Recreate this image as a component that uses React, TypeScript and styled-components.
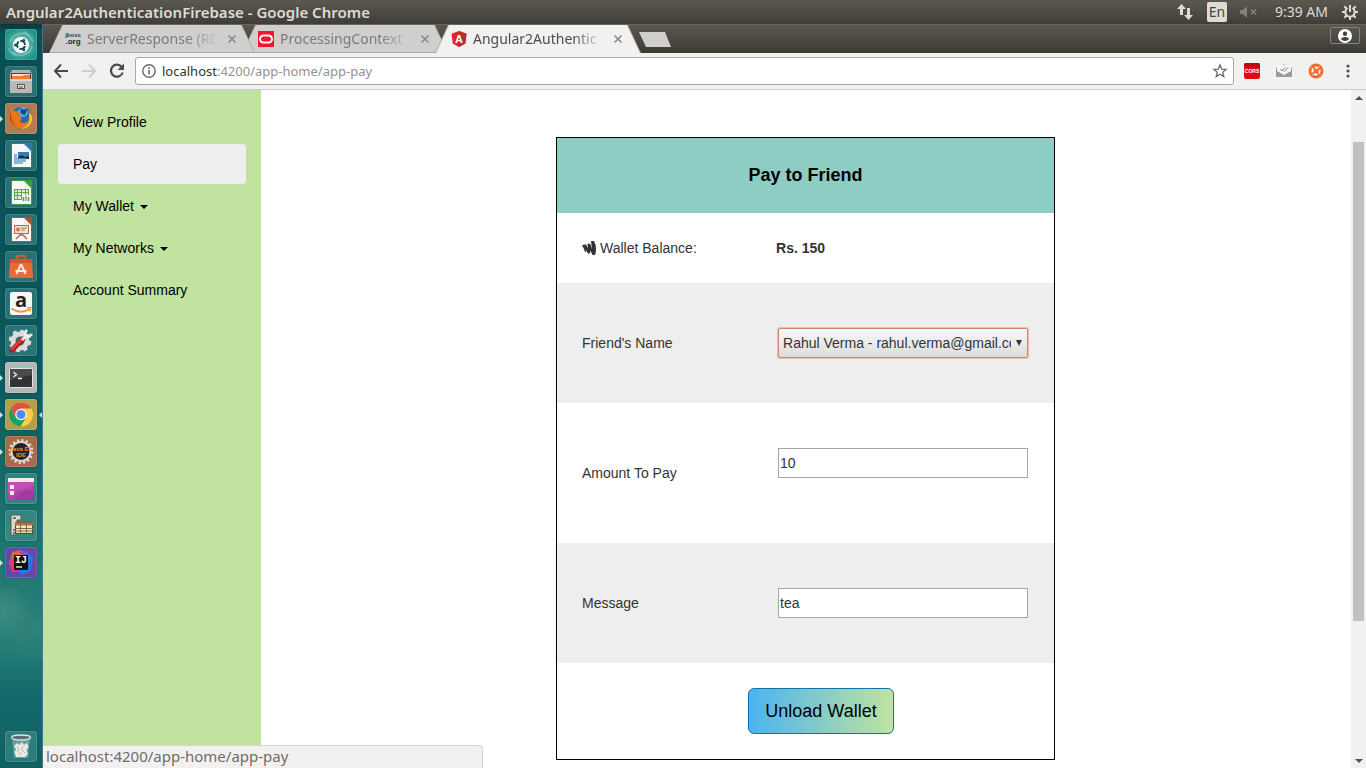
import React from 'react';
import styled, { createGlobalStyle } from 'styled-components';

const ui = "'Noto Sans', 'Open Sans', sans-serif";
const page = "'Liberation Sans', Arial, sans-serif";

const GlobalStyle = createGlobalStyle`
  *, *::before, *::after { box-sizing: border-box; }
  html, body, #root { height: 100%; }
  body { margin: 0; overflow: hidden; font-family: ${page}; }
  button { font: inherit; padding: 0; margin: 0; border: 0; background: none; color: inherit; }
  svg { display: block; flex: none; overflow: visible; }
`;

const Desktop = styled.div`
  display: flex;
  flex-direction: column;
  height: 100vh;
  overflow: hidden;
`;

/* ---- top panel ---- */
const Panel = styled.header`
  flex: none;
  height: 24px;
  display: flex;
  align-items: center;
  justify-content: space-between;
  padding: 0 8px 0 6px;
  background: linear-gradient(#5b594f, #3e3d39);
  color: #dfdbd2;
  font-family: ${ui};
`;
const PanelTitle = styled.h1`
  margin: 0;
  font-size: 15px;
  line-height: 24px;
  font-weight: 600;
  white-space: nowrap;
`;
const Indicators = styled.div`
  display: flex;
  align-items: center;
`;
const Indicator = styled.button<{ $gap: number }>`
  display: flex;
  align-items: center;
  margin-left: ${p => p.$gap}px;
  font-size: 14px;
  line-height: 20px;
  white-space: nowrap;
`;
const Lang = styled(Indicator)`
  width: 20px;
  height: 20px;
  justify-content: center;
  border-radius: 2px;
  background: #dfdbd2;
  color: #45443f;
`;

const Workspace = styled.div`
  flex: 1;
  min-height: 0;
  display: flex;
`;

/* ---- launcher ---- */
const Launcher = styled.nav`
  flex: none;
  width: 43px;
  display: flex;
  flex-direction: column;
  gap: 6px;
  padding: 5px 5px 6px;
  border-right: 1px solid #3f7690;
  background:
    radial-gradient(circle at 4px 588px, #3b8c81 0, #34877d 12px, transparent 28px),
    radial-gradient(circle at 34px 606px, #2f857c 0, #2c8078 10px, transparent 32px),
    linear-gradient(#07383d 0, #0a5054 8px, #0a5358 200px, #0b5a5d 350px, #1c7570 520px, #28827a 610px, #146a6a 670px, #0f6163 100%);
`;
const Tile = styled.button<{ $bg: string; $last?: boolean }>`
  position: relative;
  flex: none;
  width: 32px;
  height: 31px;
  margin-top: ${p => (p.$last ? 'auto' : '0')};
  border-radius: 3px;
  background: ${p => p.$bg};
  box-shadow: inset 0 0 0 1px rgba(255, 255, 255, 0.14), 0 0 2px rgba(0, 0, 0, 0.35);
`;
const Pip = styled.i<{ $right?: boolean }>`
  position: absolute;
  top: 13px;
  ${p => (p.$right ? 'right: -5px; border-right: 3px solid #cfe0df;' : 'left: -5px; border-left: 3px solid #cfe0df;')}
  border-top: 3px solid transparent;
  border-bottom: 3px solid transparent;
`;

/* ---- browser ---- */
const Browser = styled.div`
  position: relative;
  flex: 1;
  min-width: 0;
  display: flex;
  flex-direction: column;
`;
const TabStrip = styled.div`
  flex: none;
  height: 29px;
  display: flex;
  align-items: flex-start;
  padding: 0 6px;
  background: linear-gradient(#5a574e, #3c3b37);
  border-top: 1px solid #6a655a;
`;
const Tab = styled.div<{ $active?: boolean; $level: number }>`
  position: relative;
  isolation: isolate;
  z-index: ${p => p.$level};
  flex: none;
  width: 206px;
  height: 28px;
  margin-right: -13px;
  padding: 0 19px 0 16px;
  display: flex;
  align-items: center;
  gap: 6px;
  color: ${p => (p.$active ? '#4c4c4c' : '#7d7b79')};
  &::before, &::after {
    content: '';
    position: absolute;
    z-index: -1;
    inset: 0;
    clip-path: polygon(0 100%, 13px 0, calc(100% - 13px) 0, 100% 100%);
    background: #aaa8a5;
  }
  &::after {
    inset: 0 1px ${p => (p.$active ? 0 : 1)}px;
    background: ${p => (p.$active ? '#f2f1f0' : '#d0cfce')};
  }
`;
const TabTitle = styled.span`
  flex: 1;
  min-width: 0;
  overflow: hidden;
  white-space: nowrap;
  font-family: ${ui};
  font-size: 14px;
  line-height: 20px;
  mask-image: linear-gradient(to right, #000 calc(100% - 34px), transparent calc(100% - 3px));
`;
const TabClose = styled.button`
  display: flex;
  margin-left: 1px;
`;
const NewTab = styled.button`
  width: 32px;
  height: 15px;
  margin: 7px 0 0 11px;
  clip-path: polygon(0 0, 26px 0, 100% 100%, 7px 100%);
  background: #d0cfce;
`;
const Profile = styled.button`
  width: 30px;
  height: 17px;
  margin: 2px 0 0 auto;
  display: flex;
  align-items: center;
  justify-content: center;
  border: 1px solid #85837c;
  border-radius: 2px;
`;
const Toolbar = styled.div`
  flex: none;
  height: 37px;
  display: flex;
  align-items: center;
  gap: 10px;
  padding: 0 10px;
  background: #f2f1f0;
  border-bottom: 1px solid #d0cecc;
`;
const ButtonGroup = styled.div<{ $gap: number }>`
  flex: none;
  display: flex;
  gap: ${p => p.$gap}px;
`;
const ToolButton = styled.button`
  display: flex;
  flex: none;
`;
const Omnibox = styled.div`
  flex: 1;
  min-width: 0;
  height: 28px;
  display: flex;
  align-items: center;
  gap: 6px;
  padding: 0 6px;
  border: 1px solid #aaa7a4;
  border-radius: 3px;
  background: #fff;
`;
const Url = styled.span`
  flex: 1;
  font-family: ${ui};
  font-size: 13px;
  line-height: 20px;
  color: #96928f;
  b { font-weight: 400; color: #333; }
`;

/* ---- page ---- */
const Viewport = styled.div`
  flex: 1;
  min-height: 0;
  display: flex;
  background: #fff;
`;
const Site = styled.div`
  flex: 1;
  min-width: 0;
  display: flex;
  overflow: hidden;
`;
const Sidebar = styled.nav`
  flex: none;
  width: 16.67%;
  padding: 12px 15px;
  background: #c0e3a0;
`;
const NavList = styled.ul`
  list-style: none;
  margin: 0;
  padding: 0;
  display: flex;
  flex-direction: column;
  gap: 2px;
`;
const NavLink = styled.a<{ $active?: boolean }>`
  display: flex;
  align-items: center;
  gap: 6px;
  padding: 10px 15px;
  border-radius: 4px;
  background: ${p => (p.$active ? '#eee' : 'transparent')};
  color: #000;
  font-size: 14px;
  line-height: 20px;
  text-decoration: none;
`;
const Caret = styled.i`
  margin-top: 2px;
  border-top: 4px solid #000;
  border-left: 4px solid transparent;
  border-right: 4px solid transparent;
`;
const Main = styled.main`
  flex: 1;
  min-width: 0;
  padding: 47px 1px 0 0;
`;
const Card = styled.form`
  max-width: 499px;
  margin: 0 auto;
  border: 1px solid #000;
  color: #333;
  font-size: 14px;
  line-height: 20px;
`;
const CardTitle = styled.h2`
  margin: 0;
  padding: 25px;
  background: #8ecdc4;
  color: #000;
  font-size: 18px;
  line-height: 25px;
  text-align: center;
`;
const Row = styled.div<{ $shaded?: boolean; $pad: number }>`
  display: grid;
  grid-template-columns: 194px minmax(0, 1fr);
  align-items: center;
  padding: ${p => p.$pad}px 24px ${p => p.$pad}px 25px;
  background: ${p => (p.$shaded ? '#eee' : '#fff')};
`;
const RowLabel = styled.label`
  display: flex;
  align-items: center;
  gap: 4px;
`;
const Field = styled.div<{ $hint?: boolean }>`
  position: relative;
  margin: 0 2px;
  padding-bottom: ${p => (p.$hint ? 20 : 0)}px;
`;
const TextInput = styled.input`
  display: block;
  width: 100%;
  height: 30px;
  padding: 0 1px;
  border: 1px solid #a6a6a6;
  border-radius: 0;
  background: #fff;
  color: #333;
  font: 14px/20px ${page};
  outline: 0;
`;
const Select = styled.select`
  appearance: none;
  display: block;
  width: 100%;
  height: 30px;
  padding: 0 16px 0 4px;
  border: 1px solid #d0836d;
  border-radius: 2px;
  box-shadow: 0 0 0 1px rgba(240, 140, 110, 0.5);
  background: linear-gradient(#f8f8f8, #dcdcdc);
  color: #333;
  font: 14px/20px ${page};
  outline: 0;
`;
const SelectArrow = styled.i`
  position: absolute;
  top: 12px;
  right: 6px;
  border-top: 6px solid #333;
  border-left: 3px solid transparent;
  border-right: 3px solid transparent;
  pointer-events: none;
`;
const Actions = styled.div`
  padding: 25px 25px 25px 56px;
  text-align: center;
`;
const Submit = styled.button`
  padding: 10px 16px;
  border: 1px solid #0f75a8;
  border-radius: 6px;
  background: linear-gradient(to right, #4ab4f0, #c0e3a0);
  color: #000;
  font-size: 18px;
  line-height: 24px;
  vertical-align: top;
`;
const Scrollbar = styled.div`
  flex: none;
  width: 15px;
  display: grid;
  grid-template-rows: 15px 37fr 479fr 132fr 15px;
  justify-items: center;
  background: #f1f1f1;
`;
const ScrollArrow = styled.button<{ $down?: boolean }>`
  display: flex;
  align-items: center;
  grid-row: ${p => (p.$down ? 5 : 1)};
`;
const Thumb = styled.div`
  grid-row: 3;
  width: 11px;
  background: #c1c1c1;
`;
const StatusBubble = styled.div`
  position: absolute;
  left: 0;
  bottom: 0;
  width: 440px;
  height: 23px;
  padding: 0 3px;
  border: solid #d6d5d2;
  border-width: 1px 1px 0 0;
  border-radius: 0 4px 0 0;
  background: #f2f1f0;
  color: #6f6c69;
  font-family: ${ui};
  font-size: 15px;
  line-height: 21px;
`;

const glass = 'rgba(120, 190, 185, 0.28)';

const Doc = ({ c, children }: { c: string; children: React.ReactNode }) => (
  <svg width="32" height="31" viewBox="0 0 32 31">
    <path d="M6.500 3.500H19L26.500 11V27.500H6.500Z" fill="#f8f8f8" stroke={c} />
    <path d="M18 3H27V12Z" fill={c} />
    <path d="M19 3.500V11H26.500Z" fill="#e6e6e6" opacity=".5" />
    {children}
  </svg>
);

const apps: { name: string; bg: string; run?: boolean; focus?: boolean; art: React.ReactNode }[] = [
  {
    name: 'Dash', bg: 'radial-gradient(circle, #8cc9bf, #1e948a 75%)',
    art: (
      <svg width="32" height="31" viewBox="0 0 32 31">
        <path d="M5 13C7 5 19 1 25 8M27 17C26 26 14 29 7 23M4 19Q5 25 12 27M28 13Q26 6 19 3" fill="none" stroke="#b9ddd7" strokeWidth="1.500" opacity=".45" />
        <circle cx="16" cy="16" r="8" fill="#fff" />
        <circle cx="16" cy="16" r="4" fill="none" stroke="#14524f" strokeWidth="2" strokeDasharray="6.800 1.570" strokeDashoffset="-1" />
        <circle cx="10.500" cy="16" r="1.500" fill="#14524f" /><circle cx="18.800" cy="11.200" r="1.500" fill="#14524f" /><circle cx="18.800" cy="20.800" r="1.500" fill="#14524f" />
      </svg>
    ),
  },
  {
    name: 'Files', bg: glass,
    art: (
      <svg width="32" height="31" viewBox="0 0 32 31">
        <path d="M7 4H25L27 8V16H5V8Z" fill="#b5b3b0" />
        <rect x="6" y="7" width="20" height="7" fill="#54403a" />
        <path d="M7 8H25V10H7Z" fill="#f6e7d7" /><path d="M7 10H17L19 9H25V14H7Z" fill="#ed7d35" />
        <path d="M5 14H27V27H5Z" fill="#b9b8b6" /><path d="M5 14H27" stroke="#e8e6e3" strokeWidth="1.500" />
        <rect x="12.500" y="18.500" width="7" height="4" fill="#ddd" stroke="#555" /><path d="M14 21H18" stroke="#555" />
      </svg>
    ),
  },
  {
    name: 'Firefox', bg: '#b27a55', run: true,
    art: (
      <svg width="32" height="31" viewBox="0 0 32 31">
        <circle cx="16.500" cy="15" r="11" fill="#2767b0" /><circle cx="18" cy="9" r="5" fill="#5cadde" />
        <path d="M15 5Q19 8 23 5L20 12L16 11Z" fill="#164b8e" />
        <path d="M6 6Q8 8 11 8Q14 7 15 9L13 12Q18 14 16 17Q13 19 18 20Q24 20 24 14Q25 12 23 7Q28 11 28 16A12 11.500 0 0 1 4.500 17Q4 10 6 6Z" fill="#e8771c" />
        <path d="M24 10Q28 12 27 18Q24 26 16 26Q24 23 24.500 17Z" fill="#f8c430" />
        <path d="M6 8Q5 17 11 23Q7 21 5 17Q4 12 6 8Z" fill="#c6421b" />
      </svg>
    ),
  },
  {
    name: 'Writer', bg: glass,
    art: (
      <Doc c="#2a79a9">
        <rect x="13" y="12" width="11" height="7" fill="#347fb8" /><path d="M13 19V17L17 15L20 17L24 16V19Z" fill="#14334b" />
        <path d="M9 15H12M9 17H12M9 19H21M9 21H21M9 23H18" stroke="#5aa3cf" strokeWidth="1.600" />
      </Doc>
    ),
  },
  {
    name: 'Calc', bg: glass,
    art: (
      <Doc c="#3b9b3c">
        <rect x="9.500" y="12.500" width="14" height="10" fill="#dff1d5" stroke="#59a844" />
        <path d="M9 15.500H24M9 18.500H24M12.500 12V23M16.500 12V23M20.500 12V23" stroke="#59a844" />
        <rect x="17" y="18" width="9" height="7" fill="#f4f8f5" /><path d="M18.500 24V20M23.500 24V20" stroke="#3e8fc2" strokeWidth="1.500" /><path d="M21 24V19" stroke="#e8853b" strokeWidth="1.500" />
      </Doc>
    ),
  },
  {
    name: 'Impress', bg: glass,
    art: (
      <Doc c="#a35332">
        <rect x="9.500" y="11.500" width="14" height="8" fill="#f6dfd1" stroke="#c26845" />
        <circle cx="13" cy="15.500" r="2" fill="#d67150" /><path d="M16 14H22M16 16H20" stroke="#6b9e69" /><path d="M16 20V22M11 25L15 21H18L22 25" fill="none" stroke="#c26845" strokeWidth="1.500" />
      </Doc>
    ),
  },
  {
    name: 'Software', bg: glass,
    art: (
      <svg width="32" height="31" viewBox="0 0 32 31">
        <path d="M12 9V6Q12 5 13 5H19Q20 5 20 6V9" fill="none" stroke="#c85c38" strokeWidth="2.500" />
        <path d="M5 8H27L28 27H4Z" fill="#ea6a33" /><path d="M5 8H27V12H5Z" fill="#d25829" />
        <path d="M16 13L11.500 23M16 13L20.500 23M10.500 20H21.500" stroke="#fbe9df" strokeWidth="2" fill="none" />
      </svg>
    ),
  },
  {
    name: 'Amazon', bg: glass,
    art: (
      <svg width="32" height="31" viewBox="0 0 32 31">
        <rect x="5" y="4" width="22" height="23" rx="2" fill="#f7f7f7" />
        <text x="16" y="19" textAnchor="middle" fontFamily="Open Sans" fontWeight="700" fontSize="20" fill="#222">a</text>
        <path d="M6.500 20.500Q15 26.500 24 21.500" fill="none" stroke="#f29a23" strokeWidth="1.800" /><path d="M22 20L26 19.500L24.500 23.500" fill="none" stroke="#f29a23" strokeWidth="1.300" />
      </svg>
    ),
  },
  {
    name: 'Settings', bg: glass,
    art: (
      <svg width="32" height="31" viewBox="0 0 32 31">
        <circle cx="15" cy="16" r="7" fill="none" stroke="#dcdddb" strokeWidth="5" />
        <circle cx="15" cy="16" r="9.800" fill="none" stroke="#dcdddb" strokeWidth="3" strokeDasharray="4 3.700" />
        <path d="M7 25L18 14" stroke="#9c1c1c" strokeWidth="5" strokeLinecap="round" /><path d="M7 24L17 14" stroke="#e03c35" strokeWidth="3" strokeLinecap="round" />
        <path d="M17 15L22 10" stroke="#eee" strokeWidth="3" /><path d="M22 5Q19 8 21 11Q24 13 27 9" fill="none" stroke="#eee" strokeWidth="2.500" />
      </svg>
    ),
  },
  {
    name: 'Terminal', bg: '#b1b7b6', run: true,
    art: (
      <svg width="32" height="31" viewBox="0 0 32 31">
        <rect x="4.500" y="6.500" width="23" height="19" rx="1" fill="#303331" stroke="#e2e4e2" /><path d="M5 7H27V13L5 18Z" fill="#474a48" />
        <path d="M8.500 10L11.500 12.500L8.500 15M13 16.500H17" fill="none" stroke="#f2f2f2" strokeWidth="1.300" />
      </svg>
    ),
  },
  {
    name: 'Chrome', bg: '#b0a04b', run: true, focus: true,
    art: (
      <svg width="32" height="31" viewBox="0 0 32 31">
        <circle cx="16" cy="15.500" r="12" fill="#ffcd43" />
        <path d="M5.600 9.500A12 12 0 0 1 26.400 9.500H16L10.500 18.500Z" fill="#de5145" />
        <path d="M5.600 9.500A12 12 0 0 0 15.500 27.500L21 18.500L11 18.500Z" fill="#1da160" />
        <circle cx="16" cy="15.500" r="5.800" fill="#f5f5f5" /><circle cx="16" cy="15.500" r="4.500" fill="#4c8bf5" />
      </svg>
    ),
  },
  {
    name: 'Eclipse', bg: '#a56a49', run: true,
    art: (
      <svg width="32" height="31" viewBox="0 0 32 31">
        <circle cx="16" cy="15.500" r="11" fill="none" stroke="#ddd8d3" strokeWidth="3" strokeDasharray="2.200 2.120" />
        <circle cx="16" cy="15.500" r="9.500" fill="#28202a" stroke="#ddd8d3" strokeWidth="2" />
        <text x="16" y="15" textAnchor="middle" fontFamily="Liberation Sans" fontWeight="700" fontSize="6" fill="#f28a2d">Java EE</text>
        <text x="16" y="21" textAnchor="middle" fontFamily="Liberation Sans" fontWeight="700" fontSize="6" fill="#f28a2d">IDE</text>
      </svg>
    ),
  },
  {
    name: 'Window spread', bg: glass,
    art: (
      <svg width="32" height="31" viewBox="0 0 32 31">
        <rect x="3" y="6" width="26" height="21" fill="#b13ea9" /><path d="M3 9H29V17Q14 16 9 27H3Z" fill="#c050b8" /><path d="M3 21L29 13V27H3Z" fill="#8e2f8c" opacity=".35" />
        <rect x="3" y="5" width="26" height="4" fill="#efeedd" />
        <rect x="5" y="12" width="4" height="4" fill="#f5edf5" /><rect x="5" y="18" width="4" height="4" fill="#f5edf5" />
      </svg>
    ),
  },
  {
    name: 'Database', bg: glass,
    art: (
      <svg width="32" height="31" viewBox="0 0 32 31">
        <path d="M6 5H16V10H12V25H6Z" fill="#dedacb" stroke="#57564d" /><path d="M8 8H11M8 20H10M8 23H10" stroke="#777" strokeWidth="2" />
        <rect x="10.500" y="12.500" width="17" height="11" fill="#f1e6b5" stroke="#58452c" /><path d="M10 14H28" stroke="#a47a42" strokeWidth="3" /><path d="M10 18.500H28M10 21H28M15.500 14V24M21.500 14V24" stroke="#7b6847" />
      </svg>
    ),
  },
  {
    name: 'IntelliJ IDEA', bg: '#6348a6', run: true,
    art: (
      <svg width="32" height="31" viewBox="0 0 32 31">
        <path d="M7 5L16 3L22 10L14 20L4 18Z" fill="#e8632f" /><path d="M4 13L13 9L19 24L7 25Z" fill="#ea3571" /><path d="M21 5L28 10L26 23L18 28L12 24L24 18Z" fill="#167ff3" /><path d="M15 3L23 5L24 12L16 9Z" fill="#7c59d1" />
        <rect x="9" y="8" width="14" height="15" fill="#111" />
        <text x="10" y="16" fontFamily="Liberation Mono" fontWeight="700" fontSize="10" fill="#fff">IJ</text><path d="M11 20H17" stroke="#fff" strokeWidth="1.300" />
      </svg>
    ),
  },
];

const TrashArt = () => (
  <svg width="32" height="31" viewBox="0 0 32 31">
    <path d="M7 6H25L23 27H9Z" fill="#9bbab8" opacity=".55" />
    <ellipse cx="16" cy="6.500" rx="9.500" ry="2.500" fill="#53706f" stroke="#dbe4e3" strokeWidth="1.300" />
    <path d="M9 15L12 12L14 14L17 11L19 14L22 12L23.500 16L21.500 19L23 23L20 26H11L9.500 21L11 18Z" fill="#e8e9e7" />
    <path d="M12 16L14 18L12 21M18 15L17 19L20 22M14 24L16 21" fill="none" stroke="#b3bab8" />
  </svg>
);

const JbossIcon = () => (
  <svg width="16" height="16" viewBox="0 0 16 16">
    <text x="8" y="6" textAnchor="middle" fontFamily="Liberation Sans" fontSize="6" fill="#20374a" fontWeight="700">jboss</text>
    <text x="8" y="13" textAnchor="middle" fontFamily="Liberation Sans" fontSize="8" fill="#172b3a" fontWeight="700">.org</text>
  </svg>
);
const OracleIcon = () => (
  <svg width="16" height="16" viewBox="0 0 16 16">
    <rect width="16" height="16" fill="#f8152b" /><rect x="2" y="4.500" width="12" height="7" rx="3.500" fill="none" stroke="#fff" strokeWidth="2" />
  </svg>
);
const AngularIcon = () => (
  <svg width="16" height="16" viewBox="0 0 16 16">
    <path d="M8 0L15.500 2.700L14.300 12.500L8 16L1.700 12.500L.5 2.700Z" fill="#e2232f" /><path d="M8 0L15.500 2.700L14.300 12.500L8 16Z" fill="#b52e31" />
    <text x="8" y="12" textAnchor="middle" fontFamily="Liberation Sans" fontWeight="700" fontSize="11" fill="#fff">A</text>
  </svg>
);

const tabs = [
  { title: 'ServerResponse (RE', icon: <JbossIcon />, level: 2 },
  { title: 'ProcessingContext', icon: <OracleIcon />, level: 1 },
  { title: 'Angular2Authentic', icon: <AngularIcon />, level: 3, active: true },
];

const links = [
  { label: 'View Profile' },
  { label: 'Pay', active: true },
  { label: 'My Wallet', caret: true },
  { label: 'My Networks', caret: true },
  { label: 'Account Summary' },
];

export default function App() {
  return (
    <Desktop>
      <GlobalStyle />
      <Panel>
        <PanelTitle>Angular2AuthenticationFirebase - Google Chrome</PanelTitle>
        <Indicators>
          <Indicator $gap={0} aria-label="Network">
            <svg width="16" height="16" viewBox="0 0 16 16" fill="#dfdbd2"><path d="M4.500 0L9 5H6V11H3V5H0ZM11.500 16L16 11H13V4H10V11H7Z" /></svg>
          </Indicator>
          <Lang $gap={14}>En</Lang>
          <Indicator $gap={13} aria-label="Sound muted">
            <svg width="17" height="14" viewBox="0 0 17 14"><path d="M0 5H3L7 1V13L3 9H0Z" fill="#85837c" /><path d="M11 4.500L16 9.500M16 4.500L11 9.500" stroke="#85837c" strokeWidth="1.500" /></svg>
          </Indicator>
          <Indicator $gap={18}>9:39 AM</Indicator>
          <Indicator $gap={14} aria-label="System">
            <svg width="16" height="16" viewBox="0 0 16 16" fill="none" stroke="#dfdbd2" strokeWidth="2"><path d="M5.500 4A4.700 4.700 0 1 0 10.500 4M8 1V8" /><path d="M0 8H3M13 8H16M8 13V16M2.300 2.300L4.500 4.500M13.700 2.300L11.500 4.500M2.300 13.700L4.500 11.500M13.700 13.700L11.500 11.500" /></svg>
          </Indicator>
        </Indicators>
      </Panel>
      <Workspace>
        <Launcher aria-label="Launcher">
          {apps.map(a => (
            <Tile key={a.name} $bg={a.bg} aria-label={a.name}>
              {a.art}
              {a.run && <Pip />}
              {a.focus && <Pip $right />}
            </Tile>
          ))}
          <Tile $bg={glass} $last aria-label="Trash"><TrashArt /></Tile>
        </Launcher>
        <Browser>
          <TabStrip>
            {tabs.map(t => (
              <Tab key={t.title} $active={t.active} $level={t.level}>
                {t.icon}
                <TabTitle>{t.title}</TabTitle>
                <TabClose aria-label="Close tab">
                  <svg width="8" height="8" viewBox="0 0 8 8" stroke="#8b8987" strokeWidth="1.600"><path d="M.5 .5L7.500 7.500M7.500 .5L.5 7.500" /></svg>
                </TabClose>
              </Tab>
            ))}
            <NewTab aria-label="New tab" />
            <Profile aria-label="Profile">
              <svg width="14" height="14" viewBox="0 0 14 14"><circle cx="7" cy="7" r="7" fill="#fff" /><circle cx="7" cy="4.700" r="2.200" fill="#45443f" /><path d="M2.800 10Q4 8 7 8T11.200 10Q9.500 12 7 12T2.800 10Z" fill="#45443f" /></svg>
            </Profile>
          </TabStrip>
          <Toolbar>
            <ButtonGroup $gap={12}>
              <ToolButton aria-label="Back">
                <svg width="16" height="16" viewBox="0 0 16 16" fill="none" stroke="#4a4a4a" strokeWidth="2"><path d="M15 8H2.500M8 1.500L2 8L8 14.500" /></svg>
              </ToolButton>
              <ToolButton aria-label="Forward">
                <svg width="16" height="16" viewBox="0 0 16 16" fill="none" stroke="#cfcecd" strokeWidth="2"><path d="M1 8H13.500M8 1.500L14 8L8 14.500" /></svg>
              </ToolButton>
              <ToolButton aria-label="Reload">
                <svg width="16" height="16" viewBox="0 0 16 16"><path d="M12.700 4A6 6 0 1 0 13.700 9.500" fill="none" stroke="#4a4a4a" strokeWidth="2.200" /><path d="M15 .5V7H8.500Z" fill="#4a4a4a" /></svg>
              </ToolButton>
            </ButtonGroup>
            <Omnibox>
              <svg width="14" height="14" viewBox="0 0 14 14"><circle cx="7" cy="7" r="6.200" fill="none" stroke="#6b6b6b" strokeWidth="1.400" /><path d="M7 6V10.500M7 3.300V5" stroke="#6b6b6b" strokeWidth="1.600" /></svg>
              <Url><b>localhost</b>:4200/app-home/app-pay</Url>
              <svg width="14" height="14" viewBox="0 0 14 14"><path d="M7 1L8.700 5.100L13 5.400L9.700 8.200L10.800 12.600L7 10.200L3.200 12.600L4.300 8.200L1 5.400L5.300 5.100Z" fill="none" stroke="#6b6b6b" strokeWidth="1.300" /></svg>
            </Omnibox>
            <ButtonGroup $gap={16}>
              <ToolButton aria-label="CORS">
                <svg width="16" height="16" viewBox="0 0 16 16"><rect width="16" height="16" rx="2" fill="#e20a12" /><path d="M0 2Q0 0 2 0H14Q16 0 16 2V4H0Z" fill="#b9090f" /><text x="8" y="10" textAnchor="middle" fontFamily="Liberation Sans" fontWeight="700" fontSize="5" fill="#fff">CORS</text></svg>
              </ToolButton>
              <ToolButton aria-label="Mail tracker">
                <svg width="16" height="16" viewBox="0 0 16 16"><path d="M0 5L8 1L16 5V14H0Z" fill="#9b9b9b" /><path d="M1 3Q8 0 15 3V8L8 12L1 8Z" fill="#f5f5f5" /><path d="M4 6L6 8L9 4.500M7.500 7.500L8.500 8.500L12 4.500" fill="none" stroke="#8b8b8b" /></svg>
              </ToolButton>
              <ToolButton aria-label="Help">
                <svg width="16" height="16" viewBox="0 0 16 16"><circle cx="8" cy="8" r="7.500" fill="#fa6a2a" /><circle cx="8" cy="8" r="3.500" fill="none" stroke="#fff" strokeWidth="2" strokeDasharray="3.500 2" strokeDashoffset="1.750" /><path d="M3.500 4.500L5 6M11.500 3.500L10 5M4.500 12.500L6 11M12.500 11.500L11 10" stroke="#fff" /></svg>
              </ToolButton>
              <ToolButton aria-label="Menu">
                <svg width="16" height="16" viewBox="0 0 16 16" fill="#555"><circle cx="8" cy="3" r="1.600" /><circle cx="8" cy="8" r="1.600" /><circle cx="8" cy="13" r="1.600" /></svg>
              </ToolButton>
            </ButtonGroup>
          </Toolbar>
          <Viewport>
            <Site>
              <Sidebar>
                <NavList>
                  {links.map(l => (
                    <li key={l.label}>
                      <NavLink href="#" $active={l.active}>{l.label}{l.caret && <Caret />}</NavLink>
                    </li>
                  ))}
                </NavList>
              </Sidebar>
              <Main>
                <Card onSubmit={e => e.preventDefault()}>
                  <CardTitle>Pay to Friend</CardTitle>
                  <Row $pad={25}>
                    <RowLabel as="span">
                      <svg width="14" height="14" viewBox="0 0 14 14" fill="#333"><path d="M0 4.500Q2 3 4 3.500L6 7L5.500 3Q7.500 2 8.500 3.500L10 8L9 0H12Q15.500 7 13 14H10.500L8.500 9.500L8 12.500H6L3.500 8.500L4 11H3Q2 7 0 4.500Z" /></svg>
                      Wallet Balance:
                    </RowLabel>
                    <strong>Rs. 150</strong>
                  </Row>
                  <Row $pad={45} $shaded>
                    <RowLabel htmlFor="friend">Friend's Name</RowLabel>
                    <Field>
                      <Select id="friend"><option>Rahul Verma - rahul.verma@gmail.com</option></Select>
                      <SelectArrow />
                    </Field>
                  </Row>
                  <Row $pad={45}>
                    <RowLabel htmlFor="amount">Amount To Pay</RowLabel>
                    <Field $hint><TextInput id="amount" defaultValue="10" /></Field>
                  </Row>
                  <Row $pad={45} $shaded>
                    <RowLabel htmlFor="message">Message</RowLabel>
                    <Field><TextInput id="message" defaultValue="tea" /></Field>
                  </Row>
                  <Actions><Submit type="submit">Unload Wallet</Submit></Actions>
                </Card>
              </Main>
            </Site>
            <Scrollbar>
              <ScrollArrow aria-label="Scroll up"><svg width="8" height="4" viewBox="0 0 8 4"><path d="M0 4L4 0L8 4Z" fill="#505050" /></svg></ScrollArrow>
              <Thumb />
              <ScrollArrow $down aria-label="Scroll down"><svg width="8" height="4" viewBox="0 0 8 4"><path d="M0 0H8L4 4Z" fill="#505050" /></svg></ScrollArrow>
            </Scrollbar>
          </Viewport>
          <StatusBubble>localhost:4200/app-home/app-pay</StatusBubble>
        </Browser>
      </Workspace>
    </Desktop>
  );
}
